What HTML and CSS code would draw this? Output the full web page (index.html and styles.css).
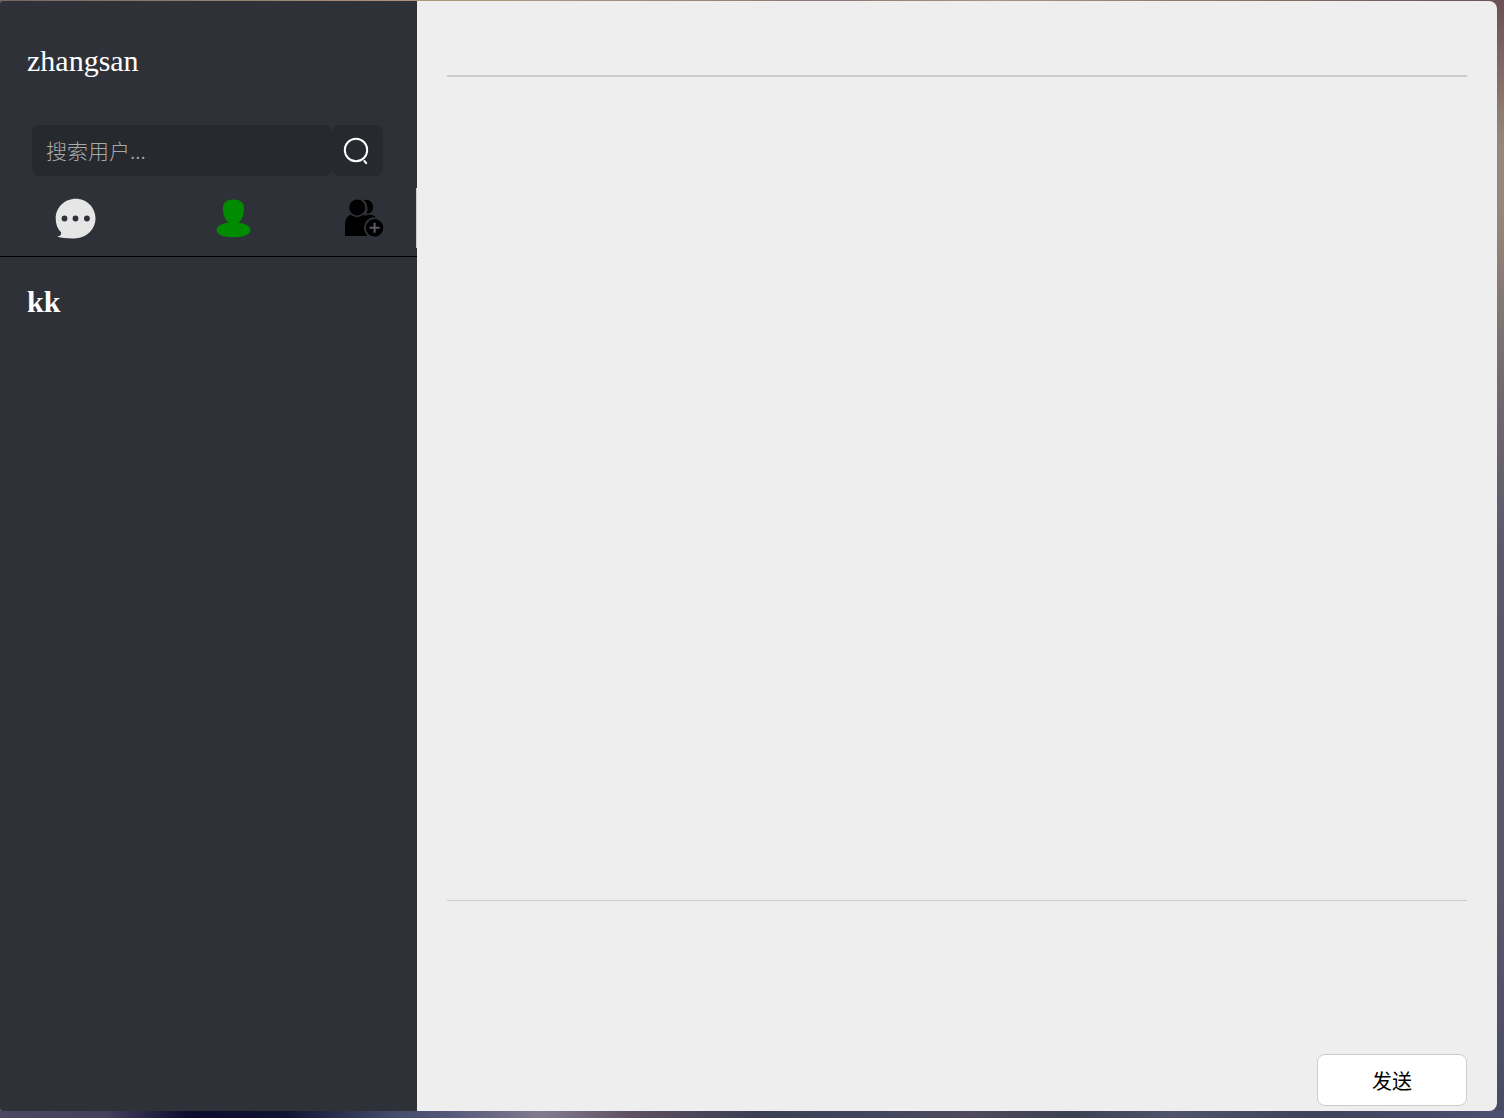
FILE: index.html
```
<!DOCTYPE html>
<html lang="zh-CN">
<head>
    <meta charset="UTF-8">
    <meta name="viewport" content="width=device-width, initial-scale=1.0">
    <title>聊天</title>
    <link rel="stylesheet" href="styles.css">
</head>
<body>
    <div class="main">
        <aside class="panel">
            <div class="header">zhangsan</div>
            <form class="search">
                <input type="text" class="search-input" placeholder="搜索用户..." aria-label="搜索用户">
                <button type="button" class="search-btn" aria-label="搜索">
                    <svg width="28" height="28" viewBox="0 0 28 28" fill="none" stroke="#fff" stroke-width="2" stroke-linecap="round">
                        <circle cx="12" cy="13" r="11.200"/>
                        <path d="M20.400 24l1.800 2.200"/>
                    </svg>
                </button>
            </form>
            <nav class="tab">
                <button type="button" class="tab-item" aria-label="聊天">
                    <svg width="40" height="40" viewBox="0 0 40 40">
                        <path fill="#e6e6e6" d="M20.700 0.700C31.600 0.700 40.500 9.400 40.500 20.200C40.500 31.400 31.500 40.200 19 40.400C13 40.500 7 40 2 38.700C4.600 38 6.800 37 6 34.200C2.500 30.800 0.700 26 0.700 20.400C0.700 9.400 9.700 0.700 20.700 0.700Z"/>
                        <g fill="#2e3238">
                            <circle cx="9.500" cy="20.500" r="2.900"/>
                            <circle cx="20.500" cy="20.500" r="2.900"/>
                            <circle cx="31.900" cy="20.500" r="2.900"/>
                        </g>
                    </svg>
                </button>
                <button type="button" class="tab-item" aria-label="好友">
                    <svg width="40" height="40" viewBox="0 0 40 40">
                        <path fill="#008b00" d="M20.400 1.500C27 1.500 31 4.600 31 10.500C31.200 16.500 29 21.500 25.400 24.700C32 25.200 37.500 28.100 37.500 32C37.500 36.600 31 39.200 20.600 39.200C10 39.200 3.700 36.600 3.700 32C3.700 28.100 8.800 25.300 15.800 24.700C12 21.500 9.800 16.500 9.900 10.500C9.900 4.600 13.900 1.500 20.400 1.500Z"/>
                    </svg>
                </button>
                <button type="button" class="tab-item" aria-label="添加好友">
                    <svg width="40" height="40" viewBox="0 0 40 40">
                        <path d="M19.500 2.100C25 0.900 29.200 4.400 29.200 9.100C29.200 12.900 26.500 15.800 22.500 15.600C24.400 11.700 24 6 19.500 2.100ZM21.500 17.600C26.500 15.600 31 17 32.800 20.400C28.700 18.900 25.400 20.400 23.600 22.400C22.400 21 20.900 19.800 19.500 18.900Z"/>
                        <path d="M7 16.400Q13 20.400 19 16.400C22.600 18.500 24.800 20.800 25.600 23.400C21.700 26.900 20.700 32.800 24 38.100H1V26.900C1 21.400 3 17.900 7 16.400Z"/>
                        <circle cx="13.200" cy="9.400" r="8.900" stroke="#2e3238" stroke-width="1.800"/>
                        <circle cx="30.600" cy="29.800" r="10.600" fill="#2e3238"/>
                        <circle cx="30.600" cy="29.800" r="8.700"/>
                        <path d="M30.600 24.800V34.800M25.600 29.800H35.600" stroke="#5a5d63" stroke-width="2"/>
                    </svg>
                </button>
            </nav>
            <ul class="contacts">
                <li class="contact-item">kk</li>
            </ul>
        </aside>

        <main class="chat">
            <div class="chat-title"></div>
            <div class="messages"></div>
            <form class="box-ft">
                <textarea class="edit-area" aria-label="消息"></textarea>
                <button type="button" class="btn-send">发送</button>
            </form>
        </main>
    </div>
</body>
</html>
```
FILE: styles.css
```
* {
    box-sizing: border-box;
}

body {
    margin: 0;
    padding: 1px 7px 7px 0;
    height: 100vh;
    font-family: "Liberation Serif", "Noto Sans CJK SC", serif;
    background:
        linear-gradient(to right, #7d6560, #b09880 30%, #a98f7b 40%, #8b7877 55%, #ab927f 66%, #6b5055) top / 100% 1px no-repeat,
        linear-gradient(to right, #4d4663, #47405d 14%, #0c0c30 25%, #111332 38%, #434a6b 52%, #565a7a 60%, #827b8f 72%, #5e5062 84%, #3c3f53) left bottom / 50% 7px no-repeat,
        linear-gradient(to right, #3c3f53, #41465e 16%, #504a5c 29%, #3c4151 42%, #50536a 56%, #3e425a 74%, #4d5070) right bottom / 50% 7px no-repeat,
        linear-gradient(to bottom, #6b5055, #988779 13%, #958679 20%, #736a70 34%, #5b586b 50%, #58576b 80%, #494b66) right / 20px 100% no-repeat,
        #5b586b;
}

.main {
    display: flex;
    height: 100%;
    border-radius: 4px 8px 8px 4px;
    overflow: hidden;
}

.panel {
    flex: 0 0 417px;
    background-color: #2e3238;
    color: #fff;
}

.header {
    padding: 42px 27px 46px;
    font-size: 30px;
    line-height: 36px;
}

.search {
    display: flex;
    padding: 0 34px 0 32px;
}

.search-input,
.search-btn {
    height: 51px;
    border: none;
    border-radius: 8px;
    background-color: #26292e;
    color: #fff;
}

.search-input {
    flex: 1;
    min-width: 0;
    padding: 0 14px 2px;
    font-family: "Noto Sans CJK SC", sans-serif;
    font-size: 21px;
    outline: none;
}

.search-input::placeholder {
    color: #aaa;
    font-weight: 300;
}

.search-btn {
    width: 51px;
    padding: 0;
    cursor: pointer;
}

.search-btn svg,
.tab-item svg {
    display: block;
    margin: auto;
    overflow: visible;
}

.tab {
    display: flex;
    padding: 12px 0 8px;
    border-bottom: 1px solid #000;
}

.tab-item {
    flex: 0 0 150px;
    height: 60px;
    padding: 0;
    border: none;
    background: none;
    cursor: pointer;
}

.tab-item:nth-child(2) {
    flex: 1;
}

.tab-item:last-child {
    flex: 0 0 101px;
    padding-right: 4px;
    border-right: 1px solid #ccc;
}

.contacts {
    margin: 0;
    padding: 0;
    list-style: none;
}

.contact-item {
    padding: 27px;
    font-size: 30px;
    font-weight: bold;
    line-height: 36px;
}

.chat {
    flex: 1;
    display: flex;
    flex-direction: column;
    padding: 0 30px;
    background-color: #eee;
}

.chat-title {
    height: 76px;
    border-bottom: 2px solid #ccc;
}

.messages {
    flex: 1;
    overflow-y: auto;
}

.box-ft {
    display: flex;
    flex-direction: column;
    align-items: flex-end;
    padding-bottom: 5px;
    border-top: 1px solid #ccc;
}

.edit-area {
    width: 100%;
    height: 153px;
    padding: 10px 0;
    border: none;
    outline: none;
    resize: none;
    background: transparent;
    font-size: 20px;
}

.btn-send {
    width: 150px;
    height: 52px;
    border: 1px solid #ccc;
    border-radius: 8px;
    background-color: #fff;
    color: #000;
    font-family: "Noto Sans CJK SC", sans-serif;
    font-size: 20px;
    cursor: pointer;
}
```
